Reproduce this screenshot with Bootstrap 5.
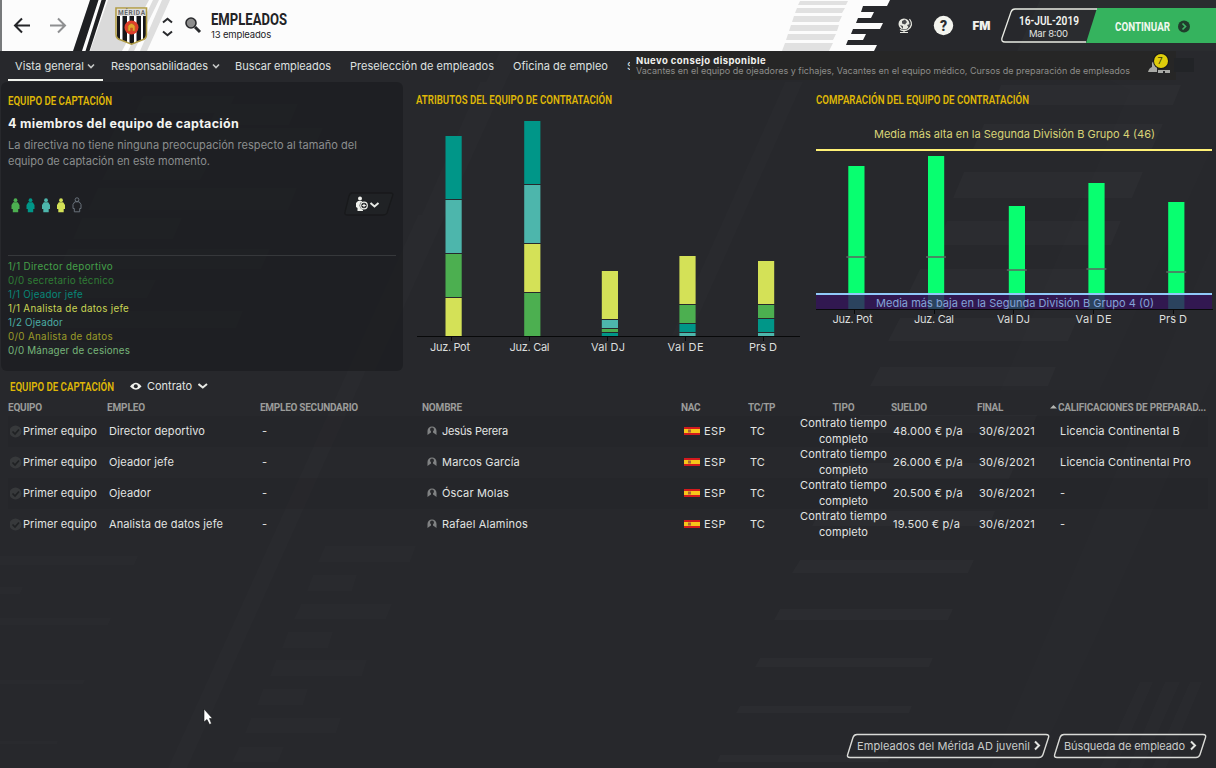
<!DOCTYPE html>
<html lang="es">
<head>
<meta charset="utf-8">
<title>Empleados</title>
<link href="https://cdn.jsdelivr.net/npm/bootstrap@5.3.0/dist/css/bootstrap.min.css" rel="stylesheet">
<style>
body{width:1216px;height:768px;background:#27282c;color:#e2e4e2;font-family:Inter,Roboto,"Liberation Sans",sans-serif;font-size:11px;line-height:16px}
.backdrop{z-index:0}
.topbar{height:51px}
.topbar .title-block{width:110px;margin-left:1px;color:#222326}
.cond{display:inline-block;transform-origin:0 50%;white-space:nowrap;font-family:Roboto,sans-serif}
.page-title{font-size:17px;font-weight:700;line-height:17px}
.sub{font-size:9.5px;line-height:13px}
.datebox{width:79px;margin-left:12px;height:34px}
.datebox svg,.go svg{overflow:visible}
.go{width:130px;height:34px;padding-left:29px;color:#fff}
.tabs{height:31px;padding-left:15px;padding-bottom:1px;z-index:1}
.tabs a{color:#dfe1e0;text-decoration:none;white-space:nowrap}
.tabs .on::after{content:"";position:absolute;left:-7px;right:-8px;bottom:-7px;height:2px;background:#f0f2ec}
.tip{left:630px;top:0;width:546px;height:29px;background:#262626;font-size:9px;line-height:10px;padding:5px 0 0 6px;color:#8d8d8a;white-space:nowrap}
.tip b{font-size:9.5px;color:#f1f1ee}
.panel-dark{width:402px;height:289px;margin-left:1px;background:rgba(26,27,30,.66);border-radius:6px;padding:10px 7px}
.h-sec{font-size:13px;font-weight:600;line-height:16px;color:#dfb707;height:16px}
.lede{font-size:12.5px;font-weight:700;color:#f3f4f1;margin-top:7px;line-height:17px}
.dim{color:#8b8e8e;margin-top:5px}
.people{height:28px;margin-top:21px}
.sep{height:1px;background:#36383b;margin:37px 0 4px}
.roles{font-size:9.8px;line-height:14px}
.staff{table-layout:fixed;width:1200px;margin-left:8px;border-collapse:collapse}
.staff th{font-family:Roboto,sans-serif;font-size:10px;font-weight:700;color:#9b9c9a;height:17px;padding:0;line-height:14px;white-space:nowrap}
.staff td{height:31px;padding:0 0 0 2px;line-height:15px;vertical-align:middle}
.staff tbody tr:nth-child(odd){background:rgba(30,32,35,.22)}
.staff td.kind{padding:0 4px 0 0;text-align:center;line-height:15.5px}
.staff td.quali{padding-left:10px}
.foot{padding:0 9px 9px 0;gap:3px}
.slant{height:26px;color:#c9ccca;padding-left:11px;line-height:26px}
.pointer{left:203px;top:708px}
svg text{font-family:Inter,Roboto,"Liberation Sans",sans-serif}
svg text.narrow{font-family:Roboto,sans-serif}
</style>
</head>
<body class="position-relative overflow-hidden d-flex flex-column">
<svg class="backdrop position-absolute top-0 start-0" width="1216" height="768">
 <g fill="#fff" fill-opacity=".018">
  <path d="M143 96H235L227 113H135ZM218 104H298L289 125H209ZM115 128H323L314 148H106ZM110 164H209L200 180H102ZM98 188H297L288 210H88ZM82 218H182L173 239H73ZM68 249H270L261 269H59ZM55 280H156L147 298H46ZM42 311H243L236 328H34ZM28 342H129L122 358H20Z"/>
  <path fill-opacity=".012" d="M0 556H138L134 565H0ZM0 587H23L20 594H0ZM0 618H111L108 625H0ZM0 680H85L83 684H0ZM0 741H58L57 744H0Z"/>
  <path fill-opacity=".012" d="M418 215L436 215L187 768L168 768ZM500 51H520L375 371H355ZM785 82H803L690 335H672ZM480 82H500L400 310H380Z"/>
  <path fill-opacity=".01" d="M325 546H416L410 562H318ZM313 575H357L352 591H307ZM301 604H392L386 619H294ZM288 632H333L328 648H282ZM276 660H367L362 676H270ZM263 689H308L303 705H257ZM251 718H341L336 733H245ZM239 747H284L278 762H232Z"/>
  <path d="M1001 85H1181L1173 105H992ZM984 124H1163L1151 151H972ZM964 172H1143L1132 198H953ZM947 221H1121L1111 245H937ZM920 269H1098L1088 294H908ZM900 318H1078L1068 341H888ZM880 367H1056L1048 386H870ZM860 415H1037L1030 433H851ZM840 463H1016L1009 479H832ZM820 511H995L989 526H812ZM800 560H974L968 573H792ZM780 609H953L948 620H774ZM760 658H933L929 667H755ZM740 706H912L909 713H736ZM720 755H891L888 762H717Z"/>
  <path d="M1045 51H1216V370L1095 640L1035 768H990L1216 235V140L1100 390H1000L1130 90Z" fill-opacity=".006"/>
  <path fill-opacity=".01" d="M1140 682L1153 682 1115 768H1100ZM1165 682H1180L1142 768H1128ZM1190 682H1202L1166 768H1152Z"/>
 </g>
</svg>

<header class="topbar position-relative d-flex align-items-center flex-shrink-0">
 <svg class="position-absolute top-0 start-0" width="1216" height="51">
  <path fill="#fcfcfc" d="M2 0H890L887 6H863L861 12H874L871 18H858L856 23H883L880 29H853L851 34H866L863 40H848L846 45H877L874 51H2Z"/>
  <path fill="#77797b" d="M0 0H2V51H0Z"/>
  <path fill="#dadada" d="M108 0H149L122 51H90Z"/>
  <path fill="#1f2023" d="M90 0H98.500L82 51H73ZM101.500 0H106L89.500 51H85.500Z"/>
  <path fill="#dedede" d="M153 0H159L134 51H128ZM162 0H170L147 51H140Z"/>
  <path fill="#e1e1e1" d="M800 1H848L846 5H798ZM797 8H845L842 13H795ZM794 16H842L839 22H792ZM791 25H839L837 31H789ZM788 34H836L833 40H786ZM785 43H833L829 51H782Z"/>
  <path fill="#2f3135" d="M1040 0H1216V51H1017Z" opacity=".4"/>
  <path fill="#35b35e" d="M1097 8H1216V43H1086Z"/>
  <path fill="none" stroke="#e9ebe4" stroke-width="1.300" d="M1097 9H1015Q1012 9 1011 12L1002 38Q1001 42 1005 42H1086"/>
 </svg>
 <svg class="position-relative" width="210" height="51" style="flex:none">
  <path d="M30 25.500H15M22 18.500L15 25.500 22 32.500" fill="none" stroke="#242528" stroke-width="2"/>
  <path d="M50 25.500H65M58 18.500L65 25.500 58 32.500" fill="none" stroke="#8e8f91" stroke-width="2"/>
  <path d="M163 22.500L167.500 18.700 172 22.500M163 31.500L167.500 35.300 172 31.500" fill="none" stroke="#28292c" stroke-width="2"/>
  <path d="M195 27L200 32" stroke="#292a2d" stroke-width="3"/><circle cx="191" cy="23" r="5" fill="#8d8d8d" stroke="#292a2d" stroke-width="1.600"/>
  <clipPath id="shield"><path d="M116 8H147V34Q147 39 142 40L131.500 44.500 121 40Q116 39 116 34Z"/></clipPath>
  <g clip-path="url(#shield)"><path fill="#fff" d="M115 7H148V46H115Z"/><path fill="#17171a" d="M117 16H120V44H117ZM122.500 16H127V44H122.500ZM129.500 16H134V45H129.500ZM136.500 16H141V44H136.500ZM143 16H146V44H143Z"/><path fill="#dedede" d="M117 9H146V16H117Z"/></g>
  <path fill="none" stroke="#b19c45" stroke-width="1.600" d="M116 8H146.500V34Q146.500 39 142 40L131.500 44.200 121 40Q116 39 116 34Z"/>
  <text class="narrow" x="118" y="15" font-size="6.500" font-weight="700" fill="#66686a" textLength="27">MÉRIDA</text>
  <circle cx="131.500" cy="27.500" r="7" fill="#df3e2b"/><path d="M128 31V26Q131.500 21 135 26V31H132.500V28H130.500V31Z" fill="#e4a42b" stroke="#b86a20" stroke-width=".7"/>
 </svg>
 <div class="title-block position-relative">
  <div class="page-title"><span class="cond" data-w="76">EMPLEADOS</span></div>
  <div class="sub"><span data-w="60">13 empleados</span></div>
 </div>
 <svg class="ms-auto position-relative" width="105" height="51">
  <g transform="translate(-890 0)"><circle cx="904" cy="24" r="5.500" fill="#e7e8e1"/><path d="M902 21L905 19.500 907 22 905 24.500 902 23.500ZM907 25L910 24 909 28ZM900 25L903 26 903 29M899 20L901 19" fill="#4a4b4d"/><path d="M909.500 19Q914 25 908 29.500Q904 32 900 29.500M904 30V32.500M900 32.500H908" fill="none" stroke="#e7e8e1" stroke-width="1.200"/>
  <circle cx="943.500" cy="25.500" r="9.700" fill="#f3f4ee"/><text class="narrow" x="943.500" y="30.500" font-size="14" font-weight="900" text-anchor="middle" fill="#292a2d">?</text>
  <text x="972.500" y="30" font-size="11.500" font-weight="900" fill="#f0f1ec" textLength="18" lengthAdjust="spacingAndGlyphs">FM</text></g>
 </svg>
 <div class="datebox position-relative text-center d-flex flex-column align-items-center">
  <svg width="72" height="34"><text class="narrow" x="8" y="15.500" font-size="13.500" font-weight="600" fill="#f4f5f1" textLength="60" lengthAdjust="spacingAndGlyphs">16-JUL-2019</text><text x="18" y="27.500" font-size="9.500" fill="#e2e4e1" textLength="39">Mar 8:00</text></svg>
 </div>
 <div class="go position-relative"><svg width="90" height="34"><text class="narrow" x="0" y="22" font-size="13.500" font-weight="700" fill="#f2f8ef" textLength="55" lengthAdjust="spacingAndGlyphs">CONTINUAR</text><circle cx="69" cy="17.500" r="6" fill="#203e2c"/><path d="M67.500 14.500L70.500 17.500 67.500 20.500" fill="none" stroke="#3fb465" stroke-width="1.700"/></svg></div>
</header>

<nav class="tabs position-relative d-flex align-items-center flex-shrink-0">
 <a class="on position-relative" href="#" style="width:80px"><span data-w="69">Vista general</span><svg class="position-absolute" style="right:0;top:5px" width="8" height="7"><path d="M1 1.500L4 4.500 7 1.500" fill="none" stroke="#c6c8c7" stroke-width="1.600"/></svg></a>
 <a href="#" class="position-relative" style="width:109px;margin-left:16px"><span data-w="97">Responsabilidades</span><svg class="position-absolute" style="right:0;top:5px" width="8" height="7"><path d="M1 1.500L4 4.500 7 1.500" fill="none" stroke="#c6c8c7" stroke-width="1.600"/></svg></a>
 <a href="#" style="margin-left:15px;width:115px"><span data-w="96">Buscar empleados</span></a>
 <a href="#" style="width:163px"><span data-w="144">Preselección de empleados</span></a>
 <a href="#" style="width:114px"><span data-w="95">Oficina de empleo</span></a>
 <a href="#">S</a>
 <div class="tip position-absolute"><div><b data-w="130">Nuevo consejo disponible</b></div><div><span data-w="494">Vacantes en el equipo de ojeadores y fichajes, Vacantes en el equipo médico, Cursos de preparación de empleados</span></div>
  <svg class="position-absolute" style="left:516px;top:0" width="80" height="29"><rect x="28" y="7" width="20" height="14" fill="#222427"/><path d="M2 21Q3 17 6 16V12Q8 8 11 11V21ZM12 22V19H24V22H19V20H17V22Z" fill="#a9aaa5"/><circle cx="15" cy="10" r="8" fill="#17171a"/><circle cx="15" cy="10" r="7" fill="#dfcd0b"/><text x="14" y="13" font-size="9" text-anchor="middle" fill="#38360e">7</text></svg></div>
</nav>

<main class="position-relative d-flex flex-shrink-0">
 <section class="panel-dark">
  <div class="h-sec"><span class="cond" data-w="104">EQUIPO DE CAPTACIÓN</span></div>
  <div class="lede"><span data-w="231">4 miembros del equipo de captación</span></div>
  <div class="dim"><span data-w="349">La directiva no tiene ninguna preocupación respecto al tamaño del</span><br><span data-w="202">equipo de captación en este momento.</span></div>
  <div class="people d-flex justify-content-between align-items-center">
   <svg width="80" height="18" viewBox="8 0 80 18">
    <defs><g id="person"><circle cx="4" cy="2.200" r="1.900"/><path d="M1.800 4.300H6.200L8 7V11H6.700V14.300H1.300V11H0V7Z"/></g></defs>
    <use href="#person" x="11.500" y="3" fill="#4caf50"/><use href="#person" x="26.500" y="3" fill="#009688"/><use href="#person" x="42" y="3" fill="#4db6ac"/><use href="#person" x="57" y="3" fill="#d4e157"/><use href="#person" x="73" y="2.500" fill="none" stroke="#68717a"/>
   </svg>
   <svg width="52" height="26" style="margin-right:1px"><path d="M8 2H47Q51 2 49.500 5L44 22Q43 24 40 24H5Q1 24 2 21L6 5Q7 2 9 2Z" fill="#202225" stroke="#18191b" stroke-width="1.300"/><circle cx="17" cy="7.500" r="2" fill="#f0f1ed"/><path d="M15 10H19L20 20H14.500V17L13 16V12Z" fill="#f0f1ed"/><circle cx="20.800" cy="14.500" r="4.200" fill="#202225"/><circle cx="21" cy="14.500" r="3.300" fill="none" stroke="#f0f1ed" stroke-width="1.200"/><path d="M19.200 14.500H22.800M21 12.700V16.300" stroke="#f0f1ed" stroke-width="1.200"/><path d="M27.500 12L31.500 15.500 35.500 12" fill="none" stroke="#e7e9e5" stroke-width="2"/></svg>
  </div>
  <div class="sep"></div>
  <div class="roles">
   <div style="color:#45a049"><span data-w="105">1/1 Director deportivo</span></div>
   <div style="color:#2f7c35"><span data-w="106">0/0 secretario técnico</span></div>
   <div style="color:#078779"><span data-w="75">1/1 Ojeador jefe</span></div>
   <div style="color:#c9d653"><span data-w="121">1/1 Analista de datos jefe</span></div>
   <div style="color:#4bada4"><span data-w="55">1/2 Ojeador</span></div>
   <div style="color:#9a9c28"><span data-w="105">0/0 Analista de datos</span></div>
   <div style="color:#76b57a"><span data-w="122">0/0 Mánager de cesiones</span></div>
  </div>
 </section>
 <svg width="405" height="289" viewBox="403 82 405 289" style="flex:none">
  <text class="narrow" x="416" y="104" font-size="13" font-weight="600" fill="#dfb707" textLength="196" lengthAdjust="spacingAndGlyphs">ATRIBUTOS DEL EQUIPO DE CONTRATACIÓN</text>
  <g id="stack"></g>
  <path d="M417 336.500H800" stroke="#08090a"/><path d="M451.500 337v4M529.500 337v4M607.500 337v4M685.500 337v4M763.500 337v4" stroke="#08090a"/>
  <g font-size="11" fill="#dcdedd"><text x="430" y="351" textLength="40">Juz. Pot</text><text x="509.500" y="351" textLength="40">Juz. Cal</text><text x="591" y="351" textLength="34">Val DJ</text><text x="667.500" y="351" textLength="36">Val DE</text><text x="749" y="351" textLength="28">Prs D</text></g>
 </svg>
 <svg width="408" height="289" viewBox="808 82 408 289" style="flex:none">
  <text class="narrow" x="816" y="104" font-size="13" font-weight="600" fill="#dfb707" textLength="213" lengthAdjust="spacingAndGlyphs">COMPARACIÓN DEL EQUIPO DE CONTRATACIÓN</text>
  <text x="874" y="138" font-size="11" fill="#d9d477" textLength="281">Media más alta en la Segunda División B Grupo 4 (46)</text>
  <path d="M816 150H1212" stroke="#fff176" stroke-width="2"/>
  <g id="compare"></g>
  <path d="M816 294H1212V309H816Z" fill="#35145a" fill-opacity=".8"/>
  <path d="M816 294H1212" stroke="#90caf9" stroke-width="2"/>
  <path d="M816 309.500H1213" stroke="#08090a"/><path d="M854.500 310v4M934.500 310v4M1013.500 310v4M1093.500 310v4M1173.500 310v4" stroke="#08090a"/>
  <text x="876" y="307" font-size="11" fill="#83a3d8" textLength="278">Media más baja en la Segunda División B Grupo 4 (0)</text>
  <g font-size="11" fill="#dcdedd"><text x="832.500" y="323" textLength="40">Juz. Pot</text><text x="914" y="323" textLength="40">Juz. Cal</text><text x="997" y="323" textLength="33">Val DJ</text><text x="1075.500" y="323" textLength="36">Val DE</text><text x="1159" y="323" textLength="28">Prs D</text></g>
 </svg>
</main>

<section class="position-relative">
 <div class="d-flex align-items-center" style="height:28px;padding:1px 0 0 10px">
  <div class="h-sec" style="width:119px;margin-top:1px"><span class="cond" data-w="104">EQUIPO DE CAPTACIÓN</span></div>
  <svg width="18" height="14"><path d="M1 7.500Q7 0 12.500 7.500Q7 14 1 7.500Z" fill="#f0f1ed"/><circle cx="6.800" cy="7.200" r="2" fill="#292a2d"/></svg>
  <span data-w="45">Contrato</span>
  <svg width="10" height="8" style="margin-left:6px"><path d="M.5 2L4.800 5.500 9 2" fill="none" stroke="#e7e9e5" stroke-width="2"/></svg>
 </div>
 <table class="staff">
  <colgroup><col style="width:99px"><col style="width:153px"><col style="width:162px"><col style="width:259px"><col style="width:67px"><col style="width:52px"><col style="width:91px"><col style="width:86px"><col style="width:73px"><col style="width:158px"></colgroup>
  <thead><tr><th><span data-w="34">EQUIPO</span></th><th><span data-w="38">EMPLEO</span></th><th><span data-w="98">EMPLEO SECUNDARIO</span></th><th><span data-w="40">NOMBRE</span></th><th><span data-w="19">NAC</span></th><th><span data-w="27">TC/TP</span></th><th class="text-center pe-1"><span data-w="22">TIPO</span></th><th><span data-w="36">SUELDO</span></th><th><span data-w="26">FINAL</span></th><th><svg width="8" height="6" style="vertical-align:1px"><path d="M0 4.500L3.500 1 7 4.500Z" fill="#b4b5b2"/></svg><span data-w="148">CALIFICACIONES DE PREPARAD...</span></th></tr></thead>
  <tbody id="rows"></tbody>
 </table>
</section>

<footer class="foot position-relative mt-auto d-flex justify-content-end">
 <div class="slant position-relative" style="width:204px"><svg class="position-absolute top-0 start-0" width="205" height="26"><path d="M11 1.500H200Q203.500 1.500 202.500 4.500L197 21.500Q196 24.500 193 24.500H4Q.7 24.500 1.700 21.500L7 4.500Q8 1.500 11 1.500Z" fill="none" stroke="#d9dad7" stroke-width="1.400"/><path d="M189 8.500L193 12.500 189 16.500" fill="none" stroke="#e3e4e1" stroke-width="2"/></svg><span data-w="173">Empleados del Mérida AD juvenil</span></div>
 <div class="slant position-relative" style="width:154px"><svg class="position-absolute top-0 start-0" width="154" height="26"><path d="M11 1.500H150Q153.500 1.500 152.500 4.500L147 21.500Q146 24.500 143 24.500H4Q.7 24.500 1.700 21.500L7 4.500Q8 1.500 11 1.500Z" fill="none" stroke="#d9dad7" stroke-width="1.400"/><path d="M138 8.500L142 12.500 138 16.500" fill="none" stroke="#e3e4e1" stroke-width="2"/></svg><span data-w="121">Búsqueda de empleado</span></div>
</footer>

<svg class="pointer position-absolute" width="12" height="18"><path d="M1 1V14L4 11.500 6.500 16.500 8.500 15.500 6.500 10.500H9.500Z" fill="#fff" stroke="#131416" stroke-width=".6"/></svg>

<script src="https://cdn.jsdelivr.net/npm/bootstrap@5.3.0/dist/js/bootstrap.bundle.min.js"></script>
<script>
const T='#009688',A='#4db6ac',Y='#d4e157',G='#4caf50';
// Stacked bars: x, then [top, bottom, colour] per segment
const stacks=[[445.5,[136,199,T],[200,253,A],[254,297,G],[298,336,Y]],
 [524.2,[121,184,T],[185,243,A],[244,292,Y],[293,336,G]],
 [601.8,[271,319,Y],[320,328,A],[329,332,G],[333,336,T]],
 [679.4,[256,304,Y],[305,323,G],[324,332,T],[333,336,A]],
 [758,[261,304,Y],[305,318,G],[319,332,T],[333,336,A]]];
stack.innerHTML=stacks.map(([x,...s])=>s.map(([a,b,c])=>`<rect x="${x}" y="${a}" width="16.200" height="${b-a}" fill="${c}"/>`).join('')).join('');
compare.innerHTML=[[848.3,166,257],[928,156,257],[1008.8,206,270],[1088.4,183,269],[1168.2,202,272]].map(([x,y,m])=>`<rect x="${x}" y="${y}" width="16.200" height="${309-y}" fill="#08ff70"/><path d="M${x-2} ${m}H${x+18}" stroke="#5d6461" stroke-width="2" opacity=".75"/>`).join('');
const sp=(t,w)=>`<span data-w="${w}">${t}</span>`;
rows.innerHTML=[
 ['Director deportivo',96,'Jesús Perera',66,'48.000 € p/a',70,'Licencia Continental B',120],
 ['Ojeador jefe',65,'Marcos García',78,'26.000 € p/a',70,'Licencia Continental Pro',131],
 ['Ojeador',42,'Óscar Molas',67,'20.500 € p/a',70,'-',5],
 ['Analista de datos jefe',114,'Rafael Alaminos',86,'19.500 € p/a',67,'-',5]
].map(r=>`<tr><td class="text-nowrap"><svg width="13" height="13" style="vertical-align:-3px"><circle cx="5.500" cy="6.500" r="6" fill="#37393b"/><path d="M2.500 6.500L5 9 9 4.500" fill="none" stroke="#1f2123" stroke-width="1.700"/></svg>${sp('Primer equipo',74)}</td><td>${sp(r[0],r[1])}</td><td>-</td>
<td><svg width="18" height="12" style="vertical-align:-2px"><path d="M3.500 10V6A4.500 4.500 0 0 1 12.500 6V10L10.500 8.500 9 7.500V4.500H7V7.500L5.500 8.500Z" fill="#808283"/><circle cx="8" cy="4.500" r="2" fill="#2a2b2e"/></svg>${sp(r[2],r[3])}</td>
<td><svg width="21" height="8" style="vertical-align:0"><path d="M1 0H17V8H1Z" fill="#d31a1d"/><path d="M1 2H17V6H1Z" fill="#f7c51a"/><path d="M5 2.500H8V5.500H5Z" fill="#a86437"/></svg>${sp('ESP',22)}</td><td>${sp('TC',15)}</td><td class="kind"><div class="text-nowrap">${sp('Contrato tiempo',87)}</div>${sp('completo',49)}</td><td>${sp(r[4],r[5])}</td><td>${sp('30/6/2021',56)}</td><td class="quali">${sp(r[6],r[7])}</td></tr>`).join('');
document.querySelectorAll('[data-w]').forEach(e=>{
 const n=e.getBoundingClientRect().width,w=+e.dataset.w;
 if(e.classList.contains('cond'))e.style.transform=`scaleX(${w/n})`;
 else if(e.textContent.length>1)e.style.letterSpacing=(w-n)/e.textContent.length+'px';
});
</script>
</body>
</html>
